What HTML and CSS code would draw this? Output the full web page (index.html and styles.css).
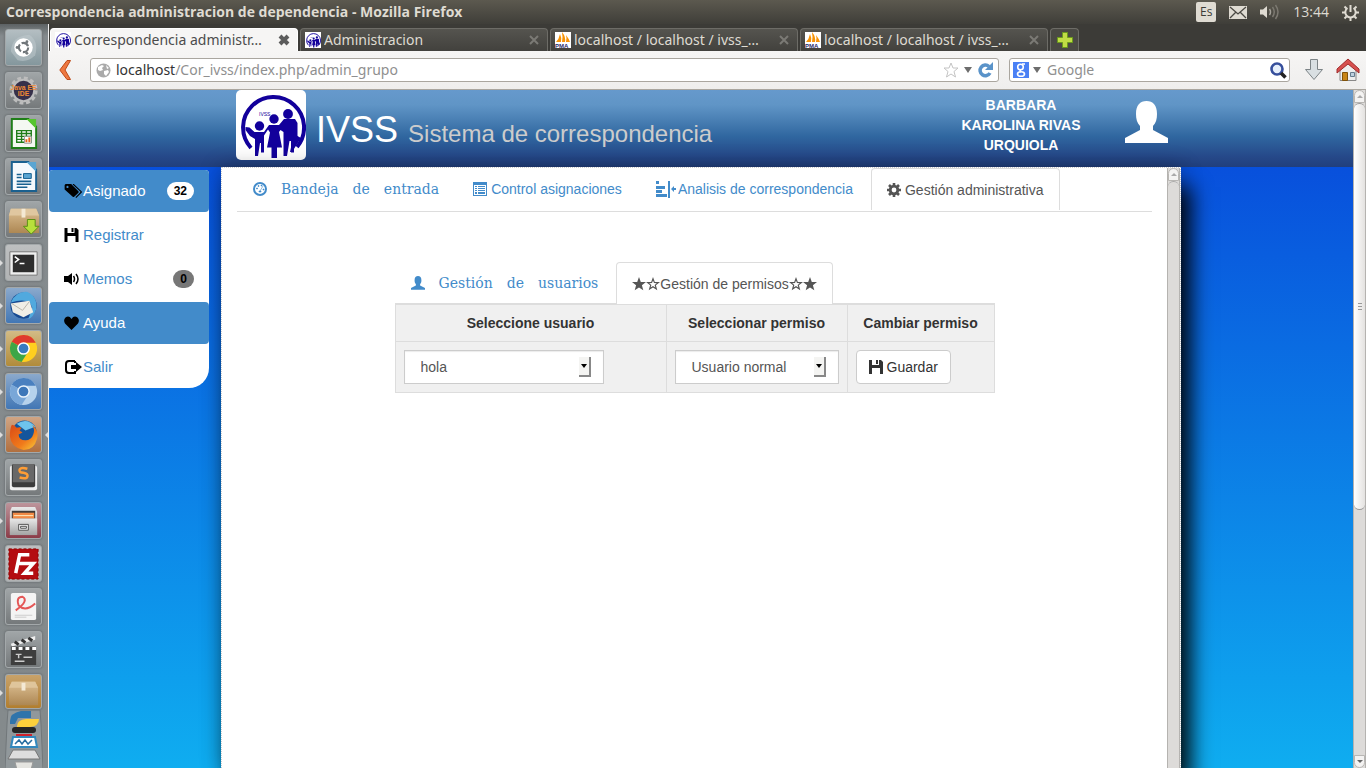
FILE: index.html
```html
<!DOCTYPE html>
<html lang="es">
<head>
<meta charset="utf-8">
<title>Correspondencia administracion de dependencia</title>
<link rel="stylesheet" href="styles.css">
</head>
<body>
<svg class="defs" aria-hidden="true">
  <defs>
    <symbol id="ivss" viewBox="0 0 70 70">
      <path d="M15 58A30.500 30.500 0 1 1 61 57" fill="none" stroke="#12009b" stroke-width="4"/>
      <g fill="#12009b">
        <circle cx="23.500" cy="36" r="4.700"/><circle cx="38" cy="29" r="4.700"/><circle cx="52" cy="24" r="4.900"/>
        <path d="M9.500 37l4 .5 5 4.500h9.500l5-7h10l5-6h11l2.500 4v16l-3.500 1v12.500h-3V51h-1.500L51 66h-3.500V42l-3-2-1.500 2 3 15.500h-5V68h-5.500V57.500H31l3-15-2-3-4 6v17h-3V53h-1l-2 13h-3V49l-5-3-4.500-6z"/>
        <path d="M58 44l7 4-9 14h-2z"/>
      </g>
      <text x="23" y="26" font-size="5" font-family="Liberation Sans" fill="#12009b">IVSS</text>
    </symbol>
    <symbol id="pma" viewBox="0 0 16 16">
      <path fill="#fff" d="M0 0h16v16H0z"/>
      <path fill="#f89406" d="M1 10Q4 7 5 2Q7 6 6 10zM7 10Q8 5 7 0Q11 5 10 10zM11 10Q12 6 11 3Q14 7 15 10z"/>
      <text x="0" y="16" font-size="6" font-weight="bold" font-family="Liberation Sans" fill="#2a2a6a">PMA</text>
    </symbol>
    <symbol id="floppy" viewBox="0 0 14 14"><path d="M0 0h3v5h7V0h2l2 2v12h-3V8H3v6H0zM7 0h2v4H7z"/></symbol>
    <symbol id="user" viewBox="0 0 43 43"><path d="M11 13C11 4 15 0 21.500 0S32 4 32 13c0 5-1 9-4 12v4l15 8v5H0v-5l15-8v-4c-3-3-4-7-4-12z"/></symbol>
    <symbol id="star" viewBox="0 0 14 14"><path d="M7 0l1.800 4.900 5.200.2-4.100 3.200 1.400 5L7 10.500l-4.300 2.800 1.400-5L0 5.100l5.200-.2z"/></symbol>
    <symbol id="star-o" viewBox="0 0 14 14"><path fill-rule="evenodd" d="M7 0l1.800 4.900 5.200.2-4.100 3.200 1.400 5L7 10.500l-4.300 2.800 1.400-5L0 5.100l5.200-.2zM7 3.500L6 6.100l-2.800.1 2.200 1.700-.8 2.600L7 9l2.400 1.500-.8-2.600 2.200-1.700L8 6.100z"/></symbol>
    <symbol id="close" viewBox="0 0 12 12"><path d="M2 2l8 8M10 2l-8 8" fill="none" stroke="currentColor"/></symbol>
    <linearGradient id="wood" x2="0" y2="1"><stop stop-color="#dcbf93"/><stop offset="1" stop-color="#ad8753"/></linearGradient>
    <linearGradient id="ff" x2="1" y2="1"><stop stop-color="#d94a16"/><stop offset=".6" stop-color="#f07a1b"/><stop offset="1" stop-color="#f8cf3b"/></linearGradient>
    <linearGradient id="metal" x2="0" y2="1"><stop stop-color="#e8e8e8"/><stop offset="1" stop-color="#a3a3a3"/></linearGradient>
  </defs>
</svg>

<header class="panel">
  <span class="panel-title">Correspondencia administracion de dependencia - Mozilla Firefox</span>
  <div class="indicators">
    <span class="lang">Es</span>
    <svg width="18" height="13" viewBox="0 0 18 13"><path fill="#dfdbd2" d="M0 0h18v13H0z"/><path d="M1 1l8 7 8-7M1 12l6-6M17 12l-6-6" fill="none" stroke="#4b4943" stroke-width="1.300"/></svg>
    <svg width="20" height="16" viewBox="0 0 20 16"><path fill="#dfdbd2" d="M0 5.500h3L7 2v12L3 10.500H0z"/><path d="M9.500 5q2 3 0 6" fill="none" stroke="#a5a29a" stroke-width="1.500"/><path d="M12.500 3q3.500 5 0 10M15.500 1q5 7 0 14" fill="none" stroke="#7c7971" stroke-width="1.500"/></svg>
    <span class="clock">13:44</span>
    <svg width="17" height="17" viewBox="0 0 17 17"><g fill="none" stroke="#dfdbd2" stroke-width="2"><path d="M5.500 4a5.200 5.200 0 1 0 6 0M8.500 1v7"/><path d="M0 8.500h3M14 8.500h3M8.500 14v3M2.500 2.500l2 2M14.500 2.500l-2 2M2.500 14.500l2-2M14.500 14.500l-2-2"/></g></svg>
  </div>
</header>

<div class="desktop">
<nav class="launcher" aria-label="Lanzador">
  <span class="tile silver"><svg viewBox="0 0 36 36"><path d="M5 22Q6 6 24 5Q34 12 30 26Q22 34 12 31" fill="#c2cccf" opacity=".5"/><circle cx="18" cy="18" r="9.500" fill="#fff"/><circle cx="18" cy="18" r="4.800" fill="none" stroke="#70767a" stroke-width="2.200" stroke-dasharray="8 2"/><g fill="#70767a"><circle cx="11.500" cy="18" r="1.500"/><circle cx="21.500" cy="12" r="1.500"/><circle cx="21.500" cy="24" r="1.500"/></g></svg></span>
  <span class="tile dark"><svg viewBox="0 0 36 36"><circle cx="18" cy="18" r="11" fill="#37304a" stroke="#bdbdbd" stroke-width="2"/><circle cx="18" cy="18" r="13" fill="none" stroke="#bdbdbd" stroke-width="3" stroke-dasharray="4 2.800"/><text x="18" y="17" text-anchor="middle" class="ee">Java EE</text><text x="18" y="24" text-anchor="middle" class="ee">IDE</text></svg></span>
  <span class="tile dark"><svg viewBox="0 0 36 36"><path fill="#f4f8f2" stroke="#1f7d19" stroke-width="2" d="M6 3h17l8 8v22H6z"/><path fill="#56c52f" d="M21 3h10v10z"/><path d="M11 15h15v12H11zM11 18h15M11 21h15M11 24h15M16 15v12M21 15v12" fill="#fff" stroke="#1f7d19" stroke-width="1.400"/><path fill="#fff" stroke="#999" d="M19 21h7v7h-7z"/><path stroke="#e8641b" stroke-width="2" d="M21 27v-3M24 27v-5"/></svg></span>
  <span class="tile dark"><svg viewBox="0 0 36 36"><path fill="#f5f9fc" stroke="#1a608f" stroke-width="2" d="M6 3h17l8 8v22H6z"/><path fill="#5aa5d2" d="M21 3h10v10z"/><path d="M11 16h5M11 19h5M11 23h15M11 26h15M11 29h11" stroke="#16608f" stroke-width="1.600"/><path fill="#5aa5d2" stroke="#16608f" d="M18 15h8v5h-8z"/></svg></span>
  <span class="tile dark"><svg viewBox="0 0 36 36"><path fill="url(#wood)" d="M5 7h26l3 7v18H3V14z"/><path fill="#e0c7a0" d="M5 7h26l3 7H3z"/><path fill="#f4e9d4" d="M16 7h4v9h-4z"/><path fill="#b8e03c" stroke="#598f13" d="M22 18h8v7h4l-8 8-8-8h4z"/></svg></span>
  <span class="tile light run"><svg viewBox="0 0 36 36"><path fill="#eee" stroke="#777" d="M4 7h28v24H4z"/><path fill="#2d2d2d" d="M7 10h22v18H7z"/><path d="M9 12l4 3-4 3M14 19h5" fill="none" stroke="#fff" stroke-width="1.600"/></svg></span>
  <span class="tile blue run"><svg viewBox="0 0 36 36"><circle cx="18" cy="18" r="13.500" fill="#174a91"/><path d="M5 15Q10 3 22 4Q33 9 31 22Q28 30 23 32L27 20Q24 9 5 15z" fill="#51a9de"/><path d="M5 16l19-3 4 12-10 5-11-5z" fill="#f0eee6"/><path d="M6 16l11 7 7-9" fill="none" stroke="#b9b4a8"/></svg></span>
  <span class="tile gold run"><svg viewBox="0 0 36 36"><circle cx="18" cy="18" r="14" fill="#ffcf1f"/><path fill="#df3a2d" d="M18 18L5.900 11A14 14 0 0 1 30.600 12H18z"/><path fill="#3da647" d="M18 18L5.900 11A14 14 0 0 0 16 31.800L23 21z"/><circle cx="18" cy="18" r="6.500" fill="#fff"/><circle cx="18" cy="18" r="5" fill="#377bc0"/></svg></span>
  <span class="tile blue run"><svg viewBox="0 0 36 36"><circle cx="18" cy="18" r="14" fill="#b6d2ec"/><path fill="#4a80bf" d="M18 18L5.900 11A14 14 0 0 1 30.600 12H18z"/><path fill="#79a7d8" d="M18 18L5.900 11A14 14 0 0 0 16 31.800L23 21z"/><circle cx="18" cy="18" r="6.500" fill="#edf5fc"/><circle cx="18" cy="18" r="5" fill="#3d77b9"/></svg></span>
  <span class="tile orange run focus"><svg viewBox="0 0 36 36"><circle cx="19" cy="16" r="12.500" fill="#14559c"/><path d="M11 7Q22 0 30 10L20 14z" fill="#6ec3ed"/><path d="M6 8q3 0 5 3 3-1 5 0l-2 3 3 2-4 2q0 6 7 6 6 0 8-6 2-5-1-10 7 6 5 14-3 12-14 12Q5 31 4 20 4 12 6 8z" fill="url(#ff)"/></svg></span>
  <span class="tile dark"><svg viewBox="0 0 36 36"><rect x="4" y="6" width="28" height="25" rx="2" fill="#eee"/><rect x="6" y="4" width="24" height="24" rx="2" fill="#3b3b3b"/><rect x="7" y="4" width="22" height="19" rx="1" fill="#686868"/><path d="M22 9q-7-2-8 1t4 3q5 1 4 4t-8 1" fill="none" stroke="#ff9d35" stroke-width="2.600"/></svg></span>
  <span class="tile wine run"><svg viewBox="0 0 36 36"><path fill="url(#metal)" d="M6 4h24l2 5v24H4V9z"/><path fill="#423b37" d="M6 8h24v8H6z"/><path fill="#f28a45" d="M7 10h22v6H7z"/><path stroke="#fff1c6" d="M8 13h20"/><path fill="url(#metal)" d="M4 16h28v17H4z"/><path d="M13 22h10v6H13zM15 24h6v2h-6z" fill="#eee" stroke="#555"/></svg></span>
  <span class="tile light"><svg viewBox="0 0 36 36"><path fill="#b40d11" stroke="#8b0000" stroke-dasharray="3 2" d="M3 3h30v31H3z"/><path d="M10 28l4-19h10M12 18h9M18 18h10l-9 10h9" fill="none" stroke="#fff" stroke-width="3.600"/></svg></span>
  <span class="tile dark"><svg viewBox="0 0 36 36"><rect x="5" y="4" width="26" height="28" rx="2" fill="#f4f4f4"/><path d="M30 15Q20 24 13 17Q10 8 17 8Q24 12 10 22" fill="none" stroke="#e45757" stroke-width="2"/><path d="M9 27h18M9 29h12" stroke="#ccc"/></svg></span>
  <span class="tile dark"><svg viewBox="0 0 36 36"><path d="M5 12l25-8v4L6 15z" fill="#eee"/><path d="M9 10l4 3M16 8l4 3M23 6l4 3" stroke="#333" stroke-width="3"/><path fill="#3e3e3e" d="M5 15h26v19H5z"/><path d="M6 17h25" stroke="#fff" stroke-width="3" stroke-dasharray="4 3"/><path d="M10 23h6M13 23v4M18 26h9M9 30h10" stroke="#ccc" stroke-width="1.500"/></svg></span>
  <span class="tile amber run"><svg viewBox="0 0 36 36"><path fill="url(#wood)" d="M6 7h24l3 6v18H3V13z"/><path fill="#dfc59b" d="M6 7h24l3 6H3z"/><path fill="#f4e9d4" d="M16 8h4v8h-4z"/></svg></span>
  <svg class="stack" viewBox="0 0 38 61"><path fill="#91989b" stroke="#71777a" d="M3 1h32l1 14 1 22 1 23H0l1-23 1-22z"/><path fill="#2f74ab" d="M5 12q0-8 11-10h10v7H13l-3 6H5z"/><path fill="#fdd03b" d="M12 17q0-6 9-7h13q0 7-9 8H12z"/><rect x="7" y="18" width="24" height="6" rx="3" fill="#262626"/><path stroke="#d1202b" stroke-width="2" d="M11 26h16"/><path fill="#fff" stroke="#3388bd" stroke-width="2" d="M8 28h22l2 10H6z"/><path d="M10 35l4-4 3 4 3-4 3 4 4-4" fill="none" stroke="#286ea1" stroke-width="1.500"/><path fill="#ddd" stroke="#777" d="M8 41h22l5 9H3z"/><path fill="#e4e4e0" stroke="#999" d="M10 53h18l-2 8H12z"/></svg>
</nav>

<div class="browser">
  <div class="tabstrip">
    <div class="btab current"><svg class="fav"><use href="#ivss"/></svg><span>Correspondencia administr…</span><button aria-label="Cerrar"><svg><use href="#close"/></svg></button></div>
    <div class="btab"><svg class="fav"><use href="#ivss"/></svg><span>Administracion</span><button aria-label="Cerrar"><svg><use href="#close"/></svg></button></div>
    <div class="btab"><svg class="fav"><use href="#pma"/></svg><span>localhost / localhost / ivss_…</span><button aria-label="Cerrar"><svg><use href="#close"/></svg></button></div>
    <div class="btab"><svg class="fav"><use href="#pma"/></svg><span>localhost / localhost / ivss_…</span><button aria-label="Cerrar"><svg><use href="#close"/></svg></button></div>
    <button class="newtab" aria-label="Nueva pestaña"><svg width="16" height="16" viewBox="0 0 16 16"><path fill="#c0dc45" stroke="#6a9a1c" d="M5.500.5h5v5h5v5h-5v5h-5v-5h-5v-5h5z"/></svg></button>
  </div>
  <div class="toolbar">
    <button class="tool back" aria-label="Atrás"><svg width="12" height="20" viewBox="0 0 12 20"><path fill="#ee7840" stroke="#bd4a18" d="M8 .5h3.500L6 10l5.500 9.500H8L.8 10z"/></svg></button>
    <div class="field url">
      <svg width="15" height="15" viewBox="0 0 15 15"><circle cx="7.500" cy="7.500" r="7" fill="#aaa"/><path d="M2 4l4-2 2 1-2 2 1 2-3 1-2-1zM8 8l4-1 1 2-3 4-2-2zM10 2l3 3-2 1z" fill="#fff"/></svg>
      <div class="address" role="textbox" aria-label="Dirección"><b>localhost</b>/Cor_ivss/index.php/admin_grupo</div>
      <svg width="16" height="16" viewBox="0 0 16 16"><path d="M8 1l2 5h5l-4 3.500 1.500 5.500L8 12l-4.500 3L5 9.500 1 6h5z" fill="#fff" stroke="#c4c4c4"/></svg>
      <svg width="8" height="6" viewBox="0 0 8 6"><path fill="#6d6d6d" d="M0 0h8L4 6z"/></svg>
      <svg width="16" height="16" viewBox="0 0 16 16"><path d="M12 4.500A5.300 5.300 0 1 0 13 11" fill="none" stroke="#5a93c9" stroke-width="3.500"/><path fill="#5a93c9" d="M16 0v8H8z"/></svg>
    </div>
    <div class="field search">
      <svg width="16" height="16" viewBox="0 0 16 16"><path fill="#4a80f5" d="M0 0h16v16H0z"/><g fill="none" stroke="#fff" stroke-width="1.600"><circle cx="7.500" cy="5" r="2.800"/><path d="M9 2h3M8 8q-2 1 0 2"/><ellipse cx="8" cy="12" rx="3.500" ry="2.300"/></g></svg>
      <svg width="8" height="6" viewBox="0 0 8 6"><path fill="#6d6d6d" d="M0 0h8L4 6z"/></svg>
      <input type="text" placeholder="Google" aria-label="Buscar">
      <svg width="17" height="17" viewBox="0 0 17 17"><circle cx="7" cy="7" r="5.500" fill="#e6effb" stroke="#364f9c" stroke-width="2.600"/><path d="M11 11l4.500 4.500" stroke="#222" stroke-width="3.500"/></svg>
    </div>
    <button class="tool" aria-label="Descargas"><svg width="18" height="22" viewBox="0 0 18 22"><path fill="#d9dfe2" stroke="#7d8487" d="M5.500.5h7v10h5L9 20.500.5 10.500h5z"/></svg></button>
    <button class="tool" aria-label="Inicio"><svg width="24" height="24" viewBox="0 0 24 24"><path fill="#eee" stroke="#888" d="M4 12l8-7 8 7v10.500H4z"/><path fill="#d7504f" stroke="#a12d2d" d="M12 1l11 10v4l-11-9-11 9v-4z"/><path fill="#c88517" stroke="#80520a" d="M6.500 14.500h5v8h-5z"/><path fill="#bed0df" stroke="#667c8e" d="M14.500 14.500h4v4h-4z"/></svg></button>
  </div>

  <div class="viewport">
    <div class="page">
      <header class="banner">
        <div class="brand">
          <svg class="logo" role="img" aria-label="IVSS"><use href="#ivss"/></svg>
          <h1>IVSS <small>Sistema de correspondencia</small></h1>
          <strong class="person">BARBARA KAROLINA RIVAS URQUIOLA</strong>
          <svg class="avatar"><use href="#user"/></svg>
        </div>
      </header>
      <div class="main">
        <ul class="menu">
          <li><a class="on" href="#"><svg viewBox="0 0 19 15" class="wide"><path fill-rule="evenodd" d="M0 1l1-1h6l8 8v1l-5 5H9L0 6zM3 2a1.200 1.200 0 1 0 .1 0z"/><path d="M9 0l9 8.500-6 6" fill="none" stroke="#000" stroke-width="1.200"/></svg><span>Asignado</span><em class="badge">32</em></a></li>
          <li><a href="#"><svg><use href="#floppy"/></svg><span>Registrar</span></a></li>
          <li><a href="#"><svg viewBox="0 0 15 12"><path d="M0 3h4l4-3v12L4 9H0z"/><path d="M9.500 3q2 3 0 6M12 1q4 5 0 10" fill="none" stroke="#000" stroke-width="1.500"/></svg><span>Memos</span><em class="badge grey">0</em></a></li>
          <li><a class="on" href="#"><svg viewBox="0 0 15 14"><path d="M7.500 14L1 7.500Q-1 4 1.500 1.500 5-1 7.500 3 10-1 13.500 1.500 16 4 14 7.500z"/></svg><span>Ayuda</span></a></li>
          <li><a href="#"><svg viewBox="0 0 17 14" class="wide"><path d="M10 1H4Q1 1 1 4v6q0 3 3 3h6v-2M10 1v2" fill="none" stroke="#000" stroke-width="2"/><path d="M6 5h5V2l6 5-6 5V9H6z"/></svg><span>Salir</span></a></li>
        </ul>
        <section class="sheet">
          <div class="sheet-body">
            <nav class="tabs top">
              <a href="#" class="serif"><svg viewBox="0 0 14 14"><circle cx="7" cy="7" r="6" fill="none" stroke="#428bca" stroke-width="2"/><path d="M7 9l3-5M6 9h2v1H6zM3.500 6h1v1h-1zM5 3.500h1v1H5zM8 3h1v1H8zM10 7h1v1h-1z" stroke="#428bca" stroke-width=".6"/></svg><span>Bandeja</span> <span>de</span> <span>entrada</span></a>
              <a href="#"><svg viewBox="0 0 14 14"><path fill-rule="evenodd" d="M0 0h14v14H0zM1 3v10h12V3z"/><path d="M2 4h2v1H2zM5 4h7v1H5zM2 6h2v1H2zM5 6h7v1H5zM2 8h2v1H2zM5 8h7v1H5zM2 10h2v2H2zM5 10h7v2H5z"/></svg><span>Control asignaciones</span></a>
              <a href="#" class="flush"><svg class="chart" viewBox="0 0 20 17"><path d="M0 0h3v3H0zM0 5h9v3H0zM0 9h6v3H0zM0 13h11v3H0zM12 0h2v17h-2zM15 8l3-3v2h2v2h-2v2z"/></svg><span>Analisis de correspondencia</span></a>
              <a href="#" class="active"><svg viewBox="0 0 14 14"><circle cx="7" cy="7" r="3.800" fill="none" stroke="#555" stroke-width="2.800"/><path d="M7 0v3M7 11v3M0 7h3M11 7h3M2 2l2 2M10 10l2 2M12 2l-2 2M4 10l-2 2" stroke="#555" stroke-width="2.600"/></svg><span>Gestión administrativa</span></a>
            </nav>
            <div class="panelbox">
              <nav class="tabs">
                <a href="#" class="serif"><svg><use href="#user"/></svg><span>Gestión</span> <span>de</span> <span>usuarios</span></a>
                <a href="#" class="active stars"><svg><use href="#star"/></svg><svg><use href="#star-o"/></svg><span>Gestión de permisos</span><svg><use href="#star-o"/></svg><svg><use href="#star"/></svg></a>
              </nav>
              <form>
                <table>
                  <colgroup><col class="c-user"><col class="c-perm"><col></colgroup>
                  <thead><tr><th><label for="usuario">Seleccione usuario</label></th><th><label for="permiso">Seleccionar permiso</label></th><th>Cambiar permiso</th></tr></thead>
                  <tbody><tr>
                    <td><div class="pick narrow"><select id="usuario"><option>hola</option></select><i></i></div></td>
                    <td><div class="pick"><select id="permiso"><option>Usuario normal</option></select><i></i></div></td>
                    <td><button type="button" class="save"><svg><use href="#floppy"/></svg>Guardar</button></td>
                  </tr></tbody>
                </table>
              </form>
            </div>
          </div>
          <div class="scroll inner"><span class="cap up"></span><span class="track"></span></div>
        </section>
      </div>
    </div>
    <div class="scroll outer"><span class="cap up"></span><span class="thumb"><i></i></span><span class="track"></span><span class="cap down"></span></div>
  </div>
</div>
</div>
</body>
</html>
```
FILE: styles.css
```css
* { box-sizing: border-box; }
html, body { height: 100%; }
body {
  margin: 0;
  display: flex;
  flex-direction: column;
  overflow: hidden;
  font: 14px/20px "Liberation Sans", Arial, sans-serif;
  color: #333;
}
svg { display: block; flex: none; fill: currentColor; }
button { font: inherit; color: inherit; border: 0; background: none; padding: 0; }
a { color: #428bca; text-decoration: none; }
ul { list-style: none; margin: 0; padding: 0; }
.defs { position: absolute; width: 0; height: 0; }

/* desktop panel */
.panel {
  flex: none;
  height: 24px;
  display: flex;
  align-items: center;
  justify-content: space-between;
  padding: 0 7px 0 6px;
  background: linear-gradient(#5c594f, #3f3e39);
  color: #dfdbd2;
  font-family: "Open Sans", sans-serif;
}
.panel-title { font-weight: bold; white-space: nowrap; }
.indicators { display: flex; align-items: center; gap: 13px; }
.lang {
  width: 20px;
  height: 20px;
  border-radius: 2px;
  background: #dfdbd2;
  color: #3c3b37;
  font-size: 12px;
  text-align: center;
}
.desktop { flex: 1; min-height: 0; display: flex; }

/* launcher */
.launcher {
  flex: none;
  width: 49px;
  padding: 5px 5px 0;
  display: flex;
  flex-direction: column;
  gap: 6px;
  overflow: hidden;
  background: linear-gradient(#5d6264, #858b8e 12px, #848a8c);
  border-right: 1px solid #f2f1f0;
}
.tile {
  position: relative;
  flex: none;
  width: 37px;
  height: 37px;
  border-radius: 3px;
  border: 1px solid #a3a8aa;
  box-shadow: 0 0 2px 1px #73787a;
  background: linear-gradient(#a8adaf, #7c8285);
}
.tile svg { width: 35px; height: 35px; }
.tile.silver { background: linear-gradient(#b4bec2, #84979d); }
.tile.dark { background: linear-gradient(#a0a5a7, #75797b); }
.tile.light { background: linear-gradient(#bdbfc0, #b1b3b4); }
.tile.blue { background: linear-gradient(#8ba9cc, #4277b5); }
.tile.gold { background: linear-gradient(#d3bb85, #b18b3a); }
.tile.orange { background: linear-gradient(#d0a584, #b16f3f); }
.tile.wine { background: linear-gradient(#bd949b, #8b3c48); }
.tile.amber { background: linear-gradient(#c8a26a, #b27e2e); height: 35px; }
.tile.run::before, .tile.focus::after {
  content: "";
  position: absolute;
  top: 15px;
  left: -6px;
  border: 3px solid transparent;
  border-left-color: #ddd;
  border-right: 0;
}
.tile.focus::after { left: auto; right: -7px; border-right: 3px solid #ddd; border-left: 0; }
.stack { width: 38px; height: 61px; margin-top: -6px; }
.ee { font: bold 7px "Liberation Sans", sans-serif; fill: #f08a35; }

/* browser frame */
.browser {
  flex: 1;
  min-width: 0;
  display: flex;
  flex-direction: column;
}
.tabstrip, .toolbar { font-family: "Noto Sans", sans-serif; }
.tabstrip {
  flex: none;
  height: 27px;
  padding: 4px 0 0 1px;
  display: flex;
  gap: 2px;
  background: #3c3b37;
}
.btab {
  flex: 0 1 248px;
  min-width: 0;
  display: flex;
  align-items: center;
  gap: 3px;
  padding: 0 7px 0 4px;
  color: #dfdbd2;
  background: linear-gradient(#55544f, #42413d);
  border: 1px solid #6d6c67;
  border-bottom: 0;
  border-radius: 4px 4px 0 0;
}
.btab span { flex: 1; white-space: nowrap; overflow: hidden; }
.btab button { color: #7b7a75; stroke-width: 2; }
.btab button svg { width: 12px; height: 12px; }
.btab.current { color: #4c4c4c; background: #f6f5f4; border-color: #fff; }
.btab.current button { color: #5c5c5c; stroke-width: 4; }
.fav { width: 16px; height: 16px; background: #fff; }
.newtab {
  width: 29px;
  display: grid;
  place-items: center;
  background: #4a4944;
  border: 1px solid #6d6c67;
  border-bottom: 0;
  border-radius: 4px 4px 0 0;
}
.toolbar {
  flex: none;
  height: 39px;
  display: flex;
  align-items: center;
  padding: 0 6px 0 10px;
  gap: 10px;
  background: linear-gradient(#f6f5f4, #efeeed);
  border-bottom: 1px solid #aaa69f;
}
.tool { width: 24px; display: grid; place-items: center; }
.tool.back { width: 12px; margin-right: 9px; }
.field {
  height: 24px;
  display: flex;
  align-items: center;
  gap: 5px;
  background: #fff;
  border: 1px solid #aaa69f;
  border-radius: 3px;
  padding: 0 5px;
}
.field.url { flex: 1; min-width: 0; }
.field.search { flex: 0 1 281px; padding: 0 2px 0 3px; gap: 4px; margin-right: 2px; }
.address { flex: 1; color: #8f8f8f; white-space: nowrap; }
.address b { font-weight: normal; color: #333; }
.search input {
  flex: 1;
  min-width: 0;
  border: 0;
  padding: 0 2px;
  font: inherit;
}
.search input::placeholder { color: #8f8f8f; opacity: 1; }

/* web page */
.viewport { flex: 1; min-height: 0; display: flex; }
.page {
  flex: 1;
  min-width: 0;
  display: flex;
  flex-direction: column;
  overflow: hidden;
  background: linear-gradient(#0850dc 77px, #0fadf0);
}
.banner {
  flex: none;
  height: 77px;
  padding: 0 172px;
  background: linear-gradient(#6699cc, #6095c6 15px, #2f669f 47px, #26498a 66px, #213f7c);
}
.brand { display: flex; align-items: flex-start; padding: 0 13px 0 15px; }
.logo { width: 70px; height: 70px; border-radius: 5px; background: #fff; }
h1 {
  flex: 1;
  margin: 20px 0 0 10px;
  font-size: 36px;
  line-height: 40px;
  font-weight: normal;
  color: #fff;
}
h1 small { font-size: 24px; color: #ccc; }
.person { width: 130px; margin: 5px 39px 0 0; text-align: center; color: #fff; }
.avatar { width: 43px; height: 43px; margin-top: 11px; color: #fff; }
.main {
  flex: 1;
  min-height: 0;
  display: grid;
  grid-template-columns: 160px minmax(0, 1fr);
  gap: 12px;
  padding-right: 172px;
}
.menu {
  position: relative;
  z-index: 1;
  align-self: start;
  margin-top: 3px;
  display: grid;
  gap: 2px;
  background: #fff;
  border-radius: 4px 4px 20px 0;
  font-size: 15px;
}
.menu a {
  height: 42px;
  display: flex;
  align-items: center;
  padding: 0 15px;
  border-radius: 4px;
}
.menu a.on { background: #428bca; color: #fff; }
.menu svg { width: 15px; height: 14px; margin-right: 4px; color: #000; }
.menu svg.wide { width: 19px; margin-right: 0; }
.menu span { flex: 1; }
.badge {
  min-width: 21px;
  padding: 0 7px;
  border-radius: 10px;
  background: #fff;
  color: #000;
  font: bold 12px/18px "Liberation Sans", sans-serif;
  text-align: center;
}
.badge.grey { background: #777; }
.sheet {
  display: flex;
  background: #fff;
  border: 1px dotted #ccc;
  border-bottom: 0;
  box-shadow: 10px 20px 20px rgba(0, 0, 0, .9), 0 0 20px rgba(0, 0, 0, .3);
}
.sheet-body { flex: 1; min-width: 0; padding: 0 15px; }
.tabs { display: flex; gap: 2px; height: 42px; }
.tabs.top { height: 44px; border-bottom: 1px solid #ddd; }
.tabs a {
  height: 42px;
  display: flex;
  align-items: center;
  gap: 4px;
  padding: 0 15px;
  border: 1px solid transparent;
  white-space: nowrap;
}
.tabs svg { width: 14px; height: 14px; }
.tabs .chart { width: 20px; height: 17px; }
.tabs .serif { gap: 14px; font-family: "DejaVu Serif", serif; }
.tabs .flush { gap: 2px; }
.tabs .stars { gap: 0; }
.tabs .active {
  color: #555;
  background: #fff;
  border-color: #ddd;
  border-bottom: 0;
  border-radius: 4px 4px 0 0;
}
.panelbox { max-width: 600px; margin: 50px auto 0; }
.panelbox .tabs { border-bottom: 1px solid #ddd; }
table {
  width: 100%;
  table-layout: fixed;
  border-collapse: collapse;
  background: #f0f0f0;
}
.c-user { width: 271px; }
.c-perm { width: 181px; }
th, td { border: 1px solid #ddd; padding: 8px; }
.pick { position: relative; }
.pick.narrow { max-width: 200px; }
select {
  display: block;
  width: 100%;
  height: 34px;
  padding: 0 16px;
  appearance: none;
  font: inherit;
  color: #555;
  background: #fff;
  border: 1px solid #ccc;
  border-radius: 0;
  box-shadow: inset 0 1px 1px rgba(0, 0, 0, .08);
}
.pick i {
  position: absolute;
  right: 13px;
  top: 7px;
  width: 12px;
  height: 20px;
  display: grid;
  place-items: center;
  background: #f4f4f2;
  border-right: 2px solid #888;
  border-bottom: 2px solid #888;
  pointer-events: none;
}
.pick i::before {
  content: "";
  border: 3px solid transparent;
  border-top: 4px solid #000;
  border-bottom: 0;
}
.save {
  display: flex;
  align-items: center;
  gap: 4px;
  height: 34px;
  padding: 0 12px;
  background: #fff;
  border: 1px solid #ccc;
  border-radius: 4px;
}
.save svg { width: 14px; height: 14px; }

/* scrollbars */
.scroll {
  flex: none;
  width: 13px;
  display: flex;
  flex-direction: column;
  background: #dddbd9;
  border: solid #b5b3b0;
  border-width: 0 1px;
}
.cap {
  flex: none;
  height: 13px;
  display: grid;
  place-items: center;
  background: #f4f3f2;
  border: 1px solid #b9b7b4;
  border-radius: 6px 6px 0 0;
}
.cap::before { content: ""; border: 3px solid transparent; }
.cap.up::before { border-bottom-color: #aaa; border-top: 0; }
.cap.down { border-radius: 0 0 6px 6px; }
.cap.down::before { border-top-color: #666; border-bottom: 0; }
.track { flex: 1; border-radius: 6px 6px 0 0; border-top: 1px solid #aaa; }
.thumb {
  flex: 0 0 60%;
  display: grid;
  place-items: center;
  background: linear-gradient(to right, #fff, #e4e2e0);
  border: 1px solid #999;
  border-width: 1px 0;
  border-radius: 6px;
}
.thumb i {
  width: 4px;
  height: 7px;
  background: repeating-linear-gradient(#999 0 1px, transparent 1px 3px);
}
.outer .track { border-top: 0; }
```
